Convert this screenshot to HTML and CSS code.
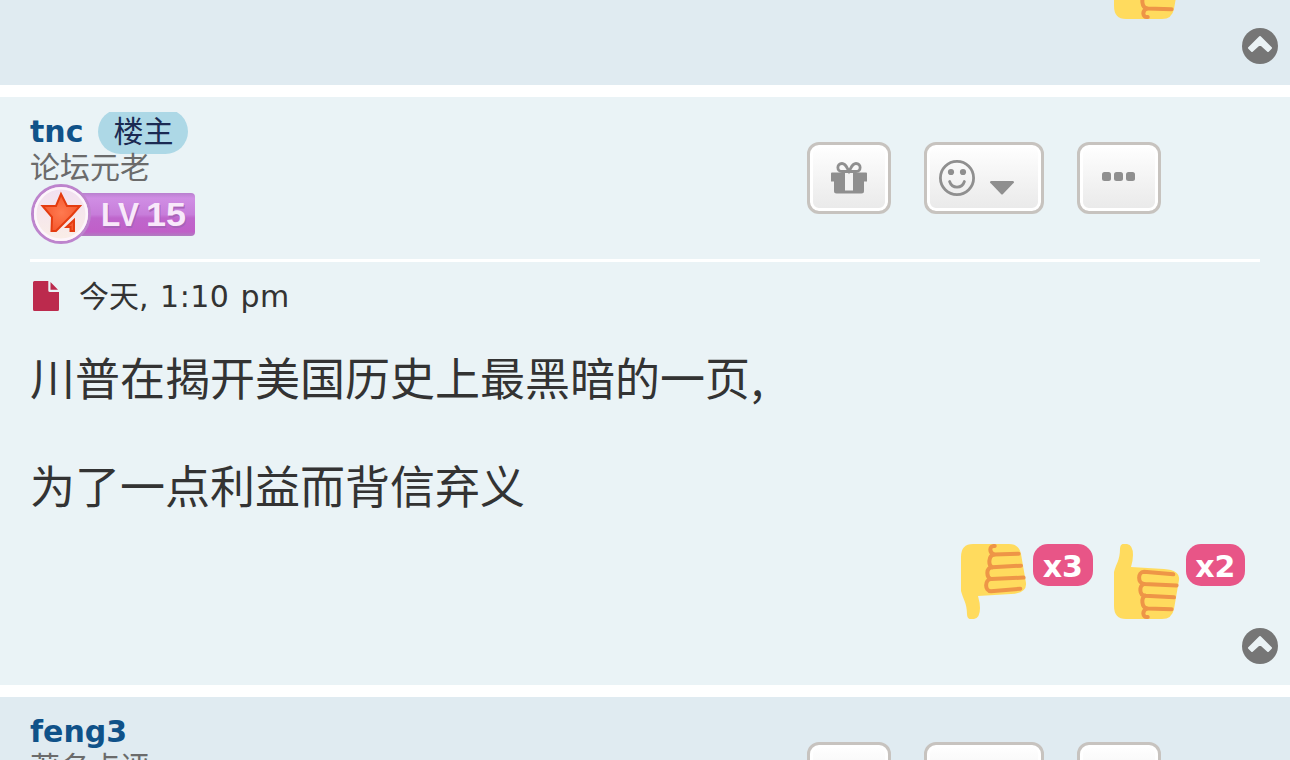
FILE: index.html
```html
<!DOCTYPE html>
<html lang="zh-CN">
  <head>
    <meta charset="UTF-8" />
    <meta name="viewport" content="width=device-width, initial-scale=1.0" />
    <title>论坛</title>
    <link rel="stylesheet" href="styles.css">
  </head>
  <body>
    <!-- shared icons -->
    <svg class="defs" width="0" height="0">
      <symbol id="thumb" viewBox="0 0 66 75">
        <path fill="#ffdb5e" d="M8.500 0H13Q19 1 19 11Q19 16 17 23L50 25Q66 26 65 36L60 65Q58 75 48 75H12Q0 75 0 62V28C2 20 6 16 6 5Q6 1 8.500 0Z" />
        <g fill="none" stroke="#ee9547" stroke-width="4" stroke-linecap="round" stroke-linejoin="round">
          <path d="M59.300 30.300L30 27.800C23.500 28 23.500 39.500 30 40L62.600 41.400" />
          <path d="M30 40C25 42 25 51 31 51.700L60 53.300" />
          <path d="M31 51.700C27 54 27.500 63.500 33 64.500L57.600 65.300" />
          <path d="M33 64.500C28 66.500 28 73.500 33.700 73" />
        </g>
      </symbol>
      <symbol id="top" viewBox="0 0 36 36">
        <circle cx="18" cy="18" r="18" fill="#767676" />
        <path fill="#ebf3f6" stroke="#ebf3f6" stroke-width="2" stroke-linejoin="round" d="M18 9L29 20L26 23L18 15.800L10 23L7 20Z" />
      </symbol>
      <symbol id="gift" viewBox="0 0 36 32">
        <path fill="#8f8f8f" d="M1 10.500H35Q36 10.500 36 11.500V19.500H33V29Q33 31.500 30.500 31.500H5.500Q3 31.500 3 29V19.500H0V11.500Q0 10.500 1 10.500Z" />
        <path fill="#f3f3f3" d="M14 10.500H22V28.500H14Z" />
        <path fill="none" stroke="#8f8f8f" stroke-width="2.800" d="M18 9.500H11C5.500 9.500 5.500 1.500 11 1.500C15 1.500 16 6 18 9.500C20 6 21 1.500 25 1.500C30.500 1.500 30.500 9.500 25 9.500Z" />
      </symbol>
      <symbol id="smile" viewBox="0 0 36 36">
        <circle cx="18" cy="18" r="16.600" fill="none" stroke="#8f8f8f" stroke-width="2.800" />
        <circle cx="12" cy="12" r="3.100" fill="#8f8f8f" />
        <circle cx="24" cy="12" r="3.100" fill="#8f8f8f" />
        <path d="M10.600 21.500C13 29 23 29 25.400 21.500" fill="none" stroke="#8f8f8f" stroke-width="2.800" stroke-linecap="round" />
      </symbol>
    </svg>

    <div class="post post-prev">
      <div class="reactions">
        <div class="reaction"><svg class="thumb"><use href="#thumb" /></svg><span class="spacer"></span></div>
      </div>
      <svg class="back-top"><use href="#top" /></svg>
    </div>

    <div class="post post-main">
      <div class="head">
        <div class="profile">
          <div class="name-row">
            <a class="name">tnc</a>
            <div class="owner-wrap"><span class="owner">楼主</span></div>
          </div>
          <div class="rank">论坛元老</div>
          <svg class="level" viewBox="0 0 166 60">
            <defs>
              <linearGradient id="lv" x1="0" y1="0" x2="0" y2="1">
                <stop offset="0" stop-color="#b980cf" />
                <stop offset=".12" stop-color="#d08ee4" />
                <stop offset=".5" stop-color="#c77dda" />
                <stop offset=".58" stop-color="#bf66cc" />
                <stop offset=".9" stop-color="#c05fc8" />
                <stop offset="1" stop-color="#b07cc0" />
              </linearGradient>
              <linearGradient id="disc" x1="0" y1="0" x2="0" y2="1">
                <stop offset="0" stop-color="#f1dff1" />
                <stop offset="1" stop-color="#faeee6" />
              </linearGradient>
              <radialGradient id="star">
                <stop offset="0" stop-color="#ff7a50" />
                <stop offset="1" stop-color="#f55a30" />
              </radialGradient>
            </defs>
            <rect x="38" y="9" width="127" height="43" rx="4" fill="url(#lv)" />
            <circle cx="31" cy="30" r="28.500" fill="url(#disc)" stroke="#bd84cd" stroke-width="3" />
            <circle cx="31" cy="30" r="25.800" fill="none" stroke="#fdf5fb" stroke-width="2.600" />
            <path d="M31 10L37 22H50L42 31L26 47H21.500L22 33L12.500 22H26Z" fill="url(#star)" stroke="#e43c10" stroke-width="2" />
            <path d="M44 36V47H40.500V43H36.500Z" fill="#f55a30" stroke="#e43c10" stroke-width="2" />
            <g class="level-shadow">
              <text x="72" y="43.500" textLength="38" lengthAdjust="spacingAndGlyphs">LV</text>
              <text x="117" y="43.500" textLength="40" lengthAdjust="spacingAndGlyphs">15</text>
            </g>
            <g class="level-text">
              <text x="71" y="42" textLength="38" lengthAdjust="spacingAndGlyphs">LV</text>
              <text x="116" y="42" textLength="40" lengthAdjust="spacingAndGlyphs">15</text>
            </g>
          </svg>
        </div>
        <div class="buttons">
          <a class="btn"><svg class="gift"><use href="#gift" /></svg></a>
          <a class="btn btn-wide">
            <svg class="smile"><use href="#smile" /></svg>
            <svg class="caret" viewBox="0 0 24 14"><path fill="#8f8f8f" d="M1 0H23Q25 1 23 2.500L13 13Q12 14 11 13L1 2.500Q-1 1 1 0Z" /></svg>
          </a>
          <a class="btn"><span class="dots"><i></i><i></i><i></i></span></a>
        </div>
      </div>
      <div class="date">
        <svg class="file" viewBox="0 0 26 30">
          <path fill="#bc2a4d" d="M1.500 0H15.300V9.500Q15.300 11 17 11H26V28.500Q26 30 24.500 30H1.500Q0 30 0 28.500V1.500Q0 0 1.500 0ZM17.500 1L25 8.700H17.500Z" />
        </svg>
        <span class="date-text">今天<span class="time">, 1:10 pm</span></span>
      </div>
      <div class="content">川普在揭开美国历史上最黑暗的一页<span class="comma">,</span><br><br>为了一点利益而背信弃义</div>
      <div class="reactions">
        <div class="reaction"><svg class="thumb down"><use href="#thumb" /></svg><span class="count">x3</span></div>
        <div class="reaction"><svg class="thumb"><use href="#thumb" /></svg><span class="count">x2</span></div>
      </div>
      <svg class="back-top"><use href="#top" /></svg>
    </div>

    <div class="post post-next">
      <div class="head">
        <div class="profile">
          <div class="name-row"><a class="name">feng3</a></div>
          <div class="rank">著名点评</div>
        </div>
        <div class="buttons">
          <a class="btn"></a>
          <a class="btn btn-wide"></a>
          <a class="btn"></a>
        </div>
      </div>
    </div>
  </body>
</html>
```
FILE: styles.css
```css
* {
  box-sizing: border-box;
}
body {
  display: flex;
  flex-direction: column;
  gap: 12px;
  margin: 0;
  width: 1290px;
  height: 760px;
  overflow: hidden;
  background: #fff;
  color: #333;
  font-family: Verdana, "DejaVu Sans", "Noto Sans CJK SC", sans-serif;
  font-size: 30px;
}
svg {
  display: block;
  flex: none;
}
.defs {
  position: absolute;
}
.post {
  position: relative;
  flex: none;
  padding: 15px 30px 0;
  overflow: hidden;
}
.post-prev {
  display: flex;
  flex-direction: column;
  justify-content: flex-end;
  height: 85px;
  padding-bottom: 66px;
  background: #e0ebf1;
}
.post-main {
  height: 588px;
  background: #eaf3f6;
}
.post-next {
  height: 63px;
  background: #e0ebf1;
}
.head {
  display: flex;
  justify-content: space-between;
  height: 150px;
  border-bottom: 3px solid #fff;
}
.name-row {
  display: flex;
  height: 40px;
}
.name {
  color: #105289;
  font-weight: bold;
  line-height: 39px;
}
.owner-wrap {
  height: 42px;
  margin-left: 15px;
  overflow: hidden;
}
.owner {
  display: block;
  width: 90px;
  height: 45px;
  margin-top: -3px;
  border-radius: 22.5px;
  background: #add8e6;
  color: #1b2a52;
  line-height: 46px;
  text-align: center;
}
.rank {
  height: 32px;
  color: #6b6b6b;
  line-height: 32px;
}
.level {
  width: 166px;
  height: 60px;
}
.level text {
  font-family: "Liberation Sans", Arial, sans-serif;
  font-size: 33px;
  font-weight: bold;
}
.level-shadow {
  fill: #a862b8;
}
.level-text {
  fill: #f8e8fa;
}
.buttons {
  display: flex;
  gap: 33px;
  margin: 30px 99px 0 0;
}
.btn {
  display: flex;
  align-items: center;
  justify-content: center;
  width: 84px;
  height: 72px;
  border: 3px solid #c7c3bf;
  border-radius: 12px;
  background: linear-gradient(#fff, #e9e9e9);
  box-shadow: inset 0 0 0 3px #fff;
}
.btn-wide {
  justify-content: flex-start;
  width: 120px;
  padding-left: 12px;
}
.gift {
  width: 36px;
  height: 32px;
  margin-bottom: 1px;
  overflow: visible;
}
.smile {
  width: 36px;
  height: 36px;
}
.caret {
  width: 24px;
  height: 14px;
  margin: 19px 0 0 15px;
}
.dots {
  display: flex;
  gap: 3px;
  margin: 0 2px 3px 0;
}
.dots i {
  width: 9px;
  height: 9px;
  border-radius: 2.5px;
  background: #8f8f8f;
}
.date {
  display: flex;
  align-items: center;
  height: 68px;
  padding-left: 3px;
}
.file {
  width: 26px;
  height: 30px;
  margin-right: 20px;
}
.date-text {
  margin-bottom: 4px;
}
.time {
  letter-spacing: 0.5px;
  word-spacing: 1px;
}
.content {
  height: 216px;
  margin-top: 20px;
  font-family: "Noto Sans CJK SC", sans-serif;
  font-size: 45px;
  line-height: 54px;
}
.comma {
  margin-left: 1px;
}
.reactions {
  display: flex;
  justify-content: flex-end;
  gap: 21px;
  margin: -22px 15px 0 0;
}
.post-prev .reactions {
  margin-top: 0;
}
.reaction {
  display: flex;
}
.thumb {
  width: 66px;
  height: 75px;
  margin-right: 6px;
}
.thumb.down {
  transform: scaleY(-1);
}
.spacer,
.count {
  width: 59.5px;
  height: 42px;
}
.count {
  border-radius: 15px;
  background: #e85587;
  color: #fff;
  font-weight: bold;
  line-height: 45px;
  text-align: center;
}
/* floats in the corner of every post */
.back-top {
  position: absolute;
  right: 12px;
  bottom: 21px;
  width: 36px;
  height: 36px;
}
```
